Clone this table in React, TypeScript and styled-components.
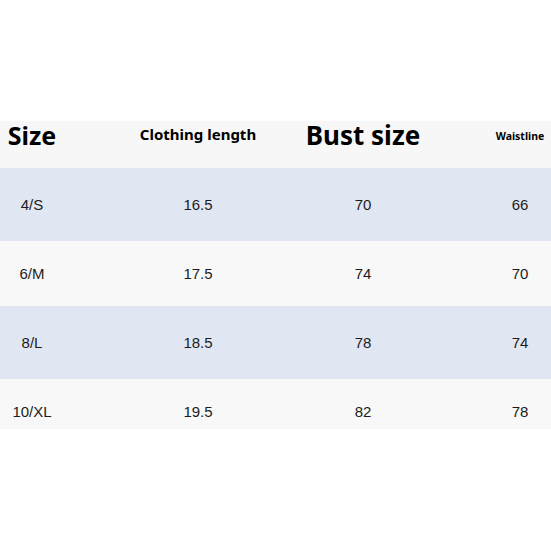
import React from "react";
import styled, { createGlobalStyle } from "styled-components";

const Global = createGlobalStyle`
  html, body { margin: 0; padding: 0; background: #ffffff; }
  body { width: 551px; height: 551px; }
`;

const Page = styled.div`
  width: 551px;
  height: 551px;
  padding-top: 121px;
  box-sizing: border-box;
  background: #ffffff;
`;

const Table = styled.div`
  display: flex;
  flex-direction: column;
`;

const Row = styled.div<{ $bg: string; $h: number; $pt?: number; $pb?: number }>`
  display: flex;
  align-items: center;
  box-sizing: border-box;
  flex: 0 0 ${(p) => p.$h}px;
  height: ${(p) => p.$h}px;
  padding-top: ${(p) => p.$pt ?? 0}px;
  padding-bottom: ${(p) => p.$pb ?? 0}px;
  background: ${(p) => p.$bg};
`;

const Cell = styled.div<{ $w: number; $ml: number }>`
  flex: 0 0 ${(p) => p.$w}px;
  width: ${(p) => p.$w}px;
  margin-left: ${(p) => p.$ml}px;
  text-align: center;
  white-space: nowrap;
  line-height: 1;
`;

const HeadText = styled.span<{ $size: number }>`
  display: inline-block;
  font-family: "Noto Sans", "Open Sans", sans-serif;
  font-weight: 700;
  font-size: ${(p) => p.$size}px;
  color: #000000;
  line-height: 1;
`;

const BodyText = styled.span`
  display: inline-block;
  font-family: "Liberation Sans", Arial, sans-serif;
  font-size: 15px;
  color: #1c1c1c;
  line-height: 1.3;
`;

const cols = [
  { w: 64, ml: 0 },
  { w: 140, ml: 64 },
  { w: 140, ml: 25 },
  { w: 62, ml: 56 },
];

const headers: { text: string; size: number }[] = [
  { text: "Size", size: 25 },
  { text: "Clothing length", size: 15 },
  { text: "Bust size", size: 26 },
  { text: "Waistline", size: 10.5 },
];

const rows = [
  { cells: ["4/S", "16.5", "70", "66"], bg: "#e1e6f3", h: 73, pt: 0 },
  { cells: ["6/M", "17.5", "74", "70"], bg: "#f8f8f8", h: 65, pt: 0 },
  { cells: ["8/L", "18.5", "78", "74"], bg: "#e1e6f3", h: 73, pt: 0 },
  { cells: ["10/XL", "19.5", "82", "78"], bg: "#f8f8f8", h: 50, pt: 15 },
];

export default function App() {
  return (
    <Page>
      <Global />
      <Table>
        <Row $bg="#f7f7f7" $h={47} $pb={19}>
          {headers.map((h, i) => (
            <Cell key={h.text} $w={cols[i].w} $ml={cols[i].ml}>
              <HeadText $size={h.size}>{h.text}</HeadText>
            </Cell>
          ))}
        </Row>
        {rows.map((r) => (
          <Row key={r.cells[0]} $bg={r.bg} $h={r.h} $pt={r.pt}>
            {r.cells.map((c, i) => (
              <Cell key={i} $w={cols[i].w} $ml={cols[i].ml}>
                <BodyText>{c}</BodyText>
              </Cell>
            ))}
          </Row>
        ))}
      </Table>
    </Page>
  );
}
